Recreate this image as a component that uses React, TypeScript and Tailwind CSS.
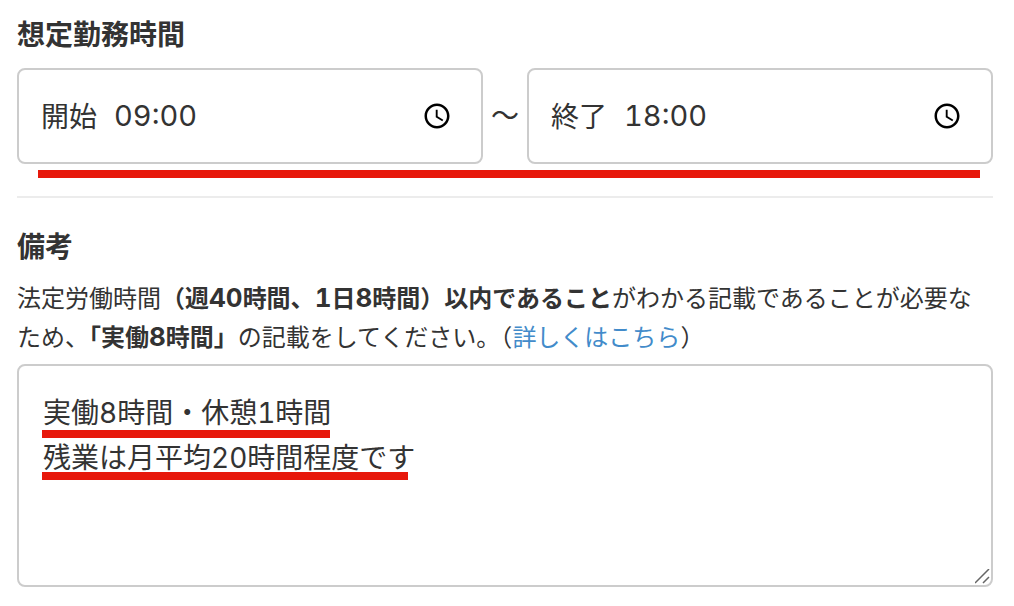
import React, { useState } from 'react';
import { MdAccessTime } from 'react-icons/md';

interface TimeFieldProps {
  id: string;
  label: string;
  value: string;
  onChange: (value: string) => void;
}

const TimeField: React.FC<TimeFieldProps> = ({ id, label, value, onChange }) => {
  return (
    <div className="flex h-24 min-w-0 flex-1 items-center rounded-lg border-2 border-[#ccc] bg-white pl-[22px] pr-[29px]">
      <label htmlFor={id} className="shrink-0 pt-0.5 text-[28px] leading-[44px]">
        {label}
      </label>
      <input
        id={id}
        type="text"
        inputMode="numeric"
        value={value}
        onChange={(e) => onChange(e.target.value)}
        className="ml-[17px] min-w-0 flex-1 bg-transparent text-[29px] leading-[44px] outline-none"
      />
      <MdAccessTime className="size-[30px] shrink-0 text-black" aria-hidden="true" />
    </div>
  );
};

// Bold figures set a little larger than the kanji around them
const Num: React.FC<{ children: React.ReactNode }> = ({ children }) => (
  <span className="text-[26px] leading-none">{children}</span>
);

const App: React.FC = () => {
  const [start, setStart] = useState('09:00');
  const [end, setEnd] = useState('18:00');
  const [note, setNote] = useState('実働8時間・休憩1時間\n残業は月平均20時間程度です');

  return (
    <main
      lang="ja"
      className="bg-white pb-5 pl-[17px] pr-[21px] pt-[13px] font-['Inter','Noto_Sans_CJK_JP',sans-serif] tabular-nums text-[#333]"
    >
      {/* Working hours */}
      <section>
        <h2 className="text-[28px] font-bold leading-[44px]">想定勤務時間</h2>
        <div className="mt-[11px] flex items-center">
          <TimeField id="start" label="開始" value={start} onChange={setStart} />
          <span className="w-11 shrink-0 text-center text-[28px] leading-[44px]">〜</span>
          <TimeField id="end" label="終了" value={end} onChange={setEnd} />
        </div>
        <div className="ml-[21px] mr-[13px] mt-1.5 h-2 bg-[#e7180b]"></div>
      </section>

      <hr className="mt-[18px] border-t-2 border-[#ececec]" />

      {/* Remarks */}
      <section className="mt-[27px]">
        <h2 className="text-[28px] font-bold leading-[44px]">
          <label htmlFor="note">備考</label>
        </h2>
        <p className="mt-2.5 pr-2 text-[24px] leading-[39px]">
          法定労働時間
          <strong>
            （週<Num>40</Num>時間、<Num>1</Num>日<Num>8</Num>時間）以内であること
          </strong>
          がわかる記載であることが必要なため、
          <strong>
            「実働<Num>8</Num>時間」
          </strong>
          の記載をしてください。（
          <a href="#" className="text-[#428bca]">詳しくはこちら</a>）
        </p>
        <div className="relative mt-[7px]">
          <textarea
            id="note"
            value={note}
            onChange={(e) => setNote(e.target.value)}
            className="block h-[223px] w-full resize-none rounded-lg border-2 border-[#ccc] bg-white px-6 py-[25px] text-[28px] leading-[45px] outline-none"
          />
          <div className="pointer-events-none absolute left-[25px] top-[66px] h-2 w-[288px] bg-[#e7180b]"></div>
          <div className="pointer-events-none absolute left-[25px] top-[108px] h-2 w-[366px] bg-[#e7180b]"></div>
          <svg
            className="pointer-events-none absolute bottom-0.5 right-0.5 size-4"
            viewBox="0 0 16 16"
            fill="none"
            stroke="#666"
            strokeWidth="1.5"
            aria-hidden="true"
          >
            <path d="M0 14L14 0M8 14L14 8" />
          </svg>
        </div>
      </section>
    </main>
  );
};

export default App;
